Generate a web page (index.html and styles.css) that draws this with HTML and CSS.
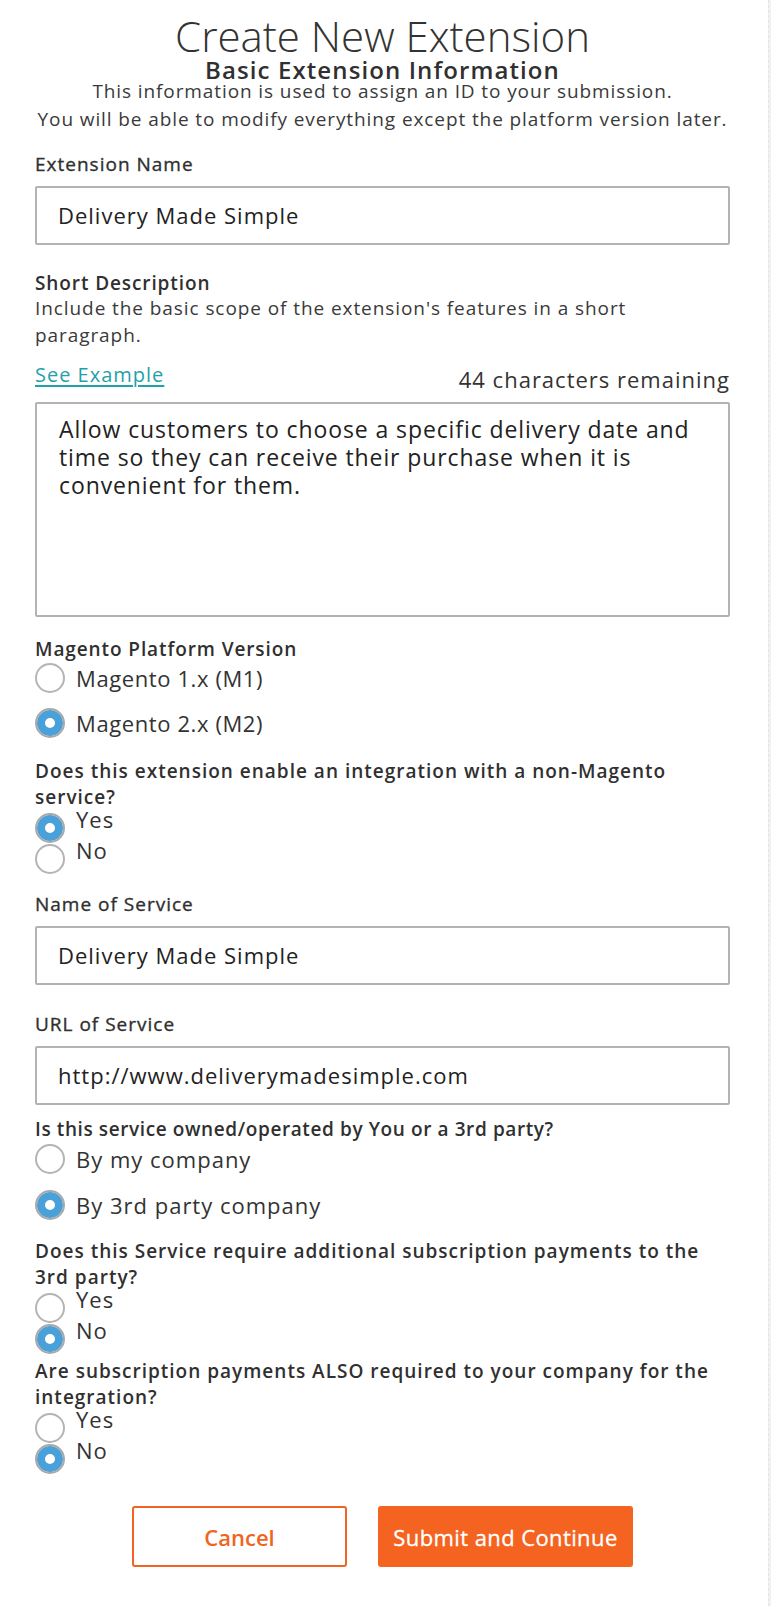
FILE: index.html
```html
<!DOCTYPE html>
<html lang="en">
<head>
<meta charset="utf-8">
<title>Create New Extension</title>
<link rel="stylesheet" href="styles.css">
</head>
<body>
<div class="page">
  <form class="form">
    <header class="header">
      <h1 class="title">Create New Extension</h1>
      <h2 class="subtitle">Basic Extension Information</h2>
      <p class="intro">This information is used to assign an ID to your submission.<br>You will be able to modify everything except the platform version later.</p>
    </header>

    <label class="label label-first">Extension Name</label>
    <div class="input">Delivery Made Simple</div>

    <div class="label label-bold label-desc">Short Description</div>
    <p class="help">Include the basic scope of the extension's features in a short paragraph.</p>
    <div class="desc-row">
      <a class="link" href="#">See Example</a>
      <span class="counter">44 characters remaining</span>
    </div>
    <div class="textarea">Allow customers to choose a specific delivery date and time so they can receive their purchase when it is convenient for them.</div>

    <div class="label label-bold label-platform">Magento Platform Version</div>
    <div class="radios radios-loose radios-platform">
      <div class="radio"><span class="dot"></span><span class="radio-text">Magento 1.x (M1)</span></div>
      <div class="radio"><span class="dot dot-on"></span><span class="radio-text">Magento 2.x (M2)</span></div>
    </div>

    <div class="question q-integration">Does this extension enable an integration with a non-Magento service?</div>
    <div class="radios radios-tight">
      <div class="radio"><span class="dot dot-on"></span><span class="radio-text">Yes</span></div>
      <div class="radio"><span class="dot"></span><span class="radio-text">No</span></div>
    </div>

    <label class="label label-service">Name of Service</label>
    <div class="input">Delivery Made Simple</div>

    <label class="label label-url">URL of Service</label>
    <div class="input">http://www.deliverymadesimple.com</div>

    <div class="question q-owned">Is this service owned/operated by You or a 3rd party?</div>
    <div class="radios radios-loose radios-owned">
      <div class="radio"><span class="dot"></span><span class="radio-text">By my company</span></div>
      <div class="radio"><span class="dot dot-on"></span><span class="radio-text">By 3rd party company</span></div>
    </div>

    <div class="question q-third">Does this Service require additional subscription payments to the 3rd party?</div>
    <div class="radios radios-tight">
      <div class="radio"><span class="dot"></span><span class="radio-text">Yes</span></div>
      <div class="radio"><span class="dot dot-on"></span><span class="radio-text">No</span></div>
    </div>

    <div class="question q-also">Are subscription payments ALSO required to your company for the integration?</div>
    <div class="radios radios-tight">
      <div class="radio"><span class="dot"></span><span class="radio-text">Yes</span></div>
      <div class="radio"><span class="dot dot-on"></span><span class="radio-text">No</span></div>
    </div>

    <div class="actions">
      <button type="button" class="btn btn-cancel">Cancel</button>
      <button type="button" class="btn btn-submit">Submit and Continue</button>
    </div>
  </form>
  <div class="edge"></div>
</div>
</body>
</html>
```

FILE: styles.css
```css
* { box-sizing: border-box; }

html, body {
  margin: 0;
  padding: 0;
  background: #ffffff;
}

body {
  font-family: "Open Sans", "Liberation Sans", sans-serif;
  color: #333333;
}

.page {
  display: flex;
  min-height: 1606px;
}

.form {
  width: 768px;
  padding: 0 38px 0 35px;
}

.edge {
  width: 3px;
  background: #f1f1f1;
  border-left: 1px dashed #e4e4e4;
}

.header {
  text-align: center;
  padding-top: 15px;
}

.title {
  margin: 0;
  font-size: 42px;
  line-height: 42px;
  font-weight: 300;
  color: #333333;
}

.subtitle {
  margin: 2px 0 0;
  font-size: 24px;
  line-height: 22px;
  font-weight: 600;
  letter-spacing: 1.1px;
  color: #303030;
}

.intro {
  margin: -4px 0 0;
  font-size: 19px;
  line-height: 28px;
  font-weight: 400;
  letter-spacing: 0.9px;
  color: #3a3a3a;
}

.label {
  display: block;
  font-size: 19px;
  line-height: 24px;
  font-weight: 400;
  letter-spacing: 1px;
  -webkit-text-stroke: 0.35px #303030;
  color: #303030;
}

.label-bold {
  font-weight: 600;
  letter-spacing: 0.9px;
  -webkit-text-stroke: 0;
}

.label-first { margin-top: 19px; }
.label-desc { margin-top: 26px; }
.label-platform { margin-top: 20px; }
.label-service { margin-top: 18px; }
.label-url { margin-top: 27px; }

.input {
  margin-top: 10px;
  height: 59px;
  border: 2px solid #b3b3b3;
  border-radius: 2px;
  padding: 0 0 2px 21px;
  display: flex;
  align-items: center;
  font-size: 22px;
  letter-spacing: 1px;
  color: #222222;
}

.help {
  margin: 0;
  font-size: 19px;
  line-height: 27px;
  letter-spacing: 0.92px;
  color: #3a3a3a;
}

.desc-row {
  margin-top: 14px;
  display: flex;
  justify-content: space-between;
  align-items: flex-end;
}

.link {
  font-size: 20px;
  line-height: 24px;
  letter-spacing: 1px;
  color: #1fa2a9;
  text-decoration: underline;
  text-underline-offset: 3px;
  margin-bottom: 5px;
}

.counter {
  font-size: 22px;
  line-height: 26px;
  letter-spacing: 1px;
  color: #333333;
}

.textarea {
  margin-top: 10px;
  height: 215px;
  border: 2px solid #b3b3b3;
  border-radius: 2px;
  padding: 11px 24px 0 22px;
  font-size: 23px;
  line-height: 28px;
  letter-spacing: 0.9px;
  color: #222222;
}

.radios {
  display: flex;
  flex-direction: column;
}

.radios-loose {
  margin-top: 2px;
  gap: 15px;
}

.radios-owned { gap: 16px; }

.radios-tight {
  margin-top: 3px;
  gap: 1px;
}

.radio {
  display: flex;
  align-items: center;
  gap: 11px;
  height: 30px;
  font-size: 22px;
  letter-spacing: 1px;
  color: #333333;
}

.radios-platform .radio { letter-spacing: 0.6px; }

.radios-tight .radio { align-items: flex-start; }

.radios-tight .radio-text {
  line-height: 30px;
  margin-top: -9px;
}

.dot {
  width: 30px;
  height: 30px;
  flex: none;
  border-radius: 50%;
  border: 2px solid #b4b4b4;
  background: #ffffff;
}

.dot-on {
  background: #ffffff;
  border: 2px solid #a9a9a9;
  box-shadow: inset 0 0 0 8px #4aa1d9;
}

.question {
  font-size: 19px;
  line-height: 26px;
  font-weight: 600;
  letter-spacing: 1px;
  color: #303030;
}

.q-integration { margin-top: 20px; }
.q-owned { margin-top: 11px; letter-spacing: 0.6px; }
.q-third { margin-top: 18px; }
.q-also { margin-top: 4px; }

.actions {
  margin-top: 32px;
  display: flex;
  justify-content: center;
  gap: 31px;
}

.btn {
  height: 61px;
  border-radius: 3px;
  font-family: inherit;
  font-size: 22px;
  cursor: pointer;
}

.btn-cancel {
  width: 215px;
  background: #ffffff;
  border: 2px solid #f26322;
  color: #f26322;
  font-weight: 600;
}

.btn-submit {
  width: 255px;
  background: #f4631f;
  border: none;
  color: #ffffff;
  font-weight: 400;
  letter-spacing: 0.4px;
  -webkit-text-stroke: 0.3px #ffffff;
}
```
